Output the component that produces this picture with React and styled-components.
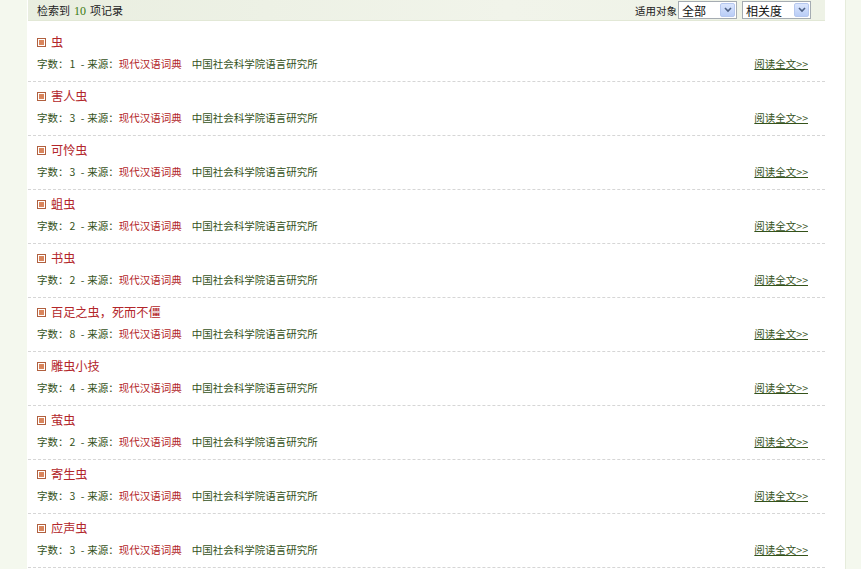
import styled, { createGlobalStyle } from "styled-components"

const GlobalStyle = createGlobalStyle`
    html, body {
        margin: 0;
        padding: 0;
        background: #f4f8ee;
        font-family: "Noto Sans CJK SC", "DejaVu Sans", sans-serif;
        font-size: 11px;
    }
`

const Page = styled.div`
    display: flex;
    min-height: 569px;
    padding-left: 27px;
`

const Main = styled.main`
    width: 797px;
    padding: 0 20px 0 1px;
    background: #fff;
    border-right: 1px solid #e6ecdc;
`

const Toolbar = styled.div`
    display: flex;
    align-items: center;
    justify-content: space-between;
    height: 20px;
    padding: 0 14px 0 9px;
    background: linear-gradient(to right, #e9eee0, #f1f4ea 60%, #eef2e6);
    border-bottom: 1px solid #e2e8d6;
    color: #222;
`

const Count = styled.span`
    color: #3b7a12;
    font-family: "Liberation Serif", serif;
    font-size: 12px;
    margin: 0 4px;
`

const Filters = styled.div`
    display: flex;
    align-items: center;
    gap: 5px;
`

const FilterLabel = styled.span`
    font-size: 10.5px;
    margin-right: -4px;
`

const FakeSelect = styled.div`
    display: flex;
    align-items: center;
    justify-content: space-between;
    width: ${props => props.w}px;
    height: 16px;
    border: 1px solid #a5acb2;
    background: #fff;
    box-sizing: content-box;
    font-size: 12px;
    color: #111;
    padding-left: 3px;
`

const Arrow = styled.span`
    display: flex;
    align-items: center;
    justify-content: center;
    width: 15px;
    height: 14px;
    margin-right: 1px;
    background: linear-gradient(#dbe6fd, #b9cdf6);
    border: 1px solid #b6c8ef;
    box-sizing: border-box;
    border-radius: 2px;
`

const List = styled.ul`
    list-style: none;
    margin: 0;
    padding: 7px 0 0;
`

const Item = styled.li`
    padding: 4px 17px 8px 9px;
    border-bottom: 1px dashed #d6d6d6;
`

const Title = styled.div`
    display: flex;
    align-items: center;
    gap: 5px;
    height: 20px;
    font-size: 12.2px;
    color: #b3262a;
`

const Bullet = styled.span`
    width: 9px;
    height: 9px;
    border: 1px solid #b0603f;
    box-sizing: border-box;
    background: #fff;
    padding: 1px;
    display: flex;

    &::after {
        content: "";
        flex: 1;
        background: #d9855c;
    }
`

const Meta = styled.div`
    display: flex;
    align-items: center;
    justify-content: space-between;
    height: 20px;
    margin-top: 1px;
    font-size: 10.5px;
    color: #34521a;
`

const Length = styled.span`
    margin: 0 3px 0 1px;
    word-spacing: 3px;
`

const Source = styled.span`
    color: #b3262a;
`

const Publisher = styled.span`
    margin-left: 10px;
`

const ReadMore = styled.a`
    color: #34521a;
    text-decoration: underline;
    cursor: pointer;
`

const entries = [
    { title: "虫", count: 1 },
    { title: "害人虫", count: 3 },
    { title: "可怜虫", count: 3 },
    { title: "蛆虫", count: 2 },
    { title: "书虫", count: 2 },
    { title: "百足之虫，死而不僵", count: 8 },
    { title: "雕虫小技", count: 4 },
    { title: "萤虫", count: 2 },
    { title: "寄生虫", count: 3 },
    { title: "应声虫", count: 3 },
]

function Chevron() {
    return (
        <svg width="8" height="6" viewBox="0 0 8 6">
            <path d="M1 1 L4 4 L7 1" fill="none" stroke="#4d6185" strokeWidth="1.6" />
        </svg>
    )
}

function App() {
    return (
        <Page>
            <GlobalStyle />
            <Main>
                <Toolbar>
                    <span>检索到<Count>10</Count>项记录</span>
                    <Filters>
                        <FilterLabel>适用对象</FilterLabel>
                        <FakeSelect w={54}>全部<Arrow><Chevron /></Arrow></FakeSelect>
                        <FakeSelect w={64}>相关度<Arrow><Chevron /></Arrow></FakeSelect>
                    </Filters>
                </Toolbar>
                <List>
                    {entries.map(entry => (
                        <Item key={entry.title}>
                            <Title>
                                <Bullet />
                                {entry.title}
                            </Title>
                            <Meta>
                                <span>
                                    字数：<Length>{entry.count} -</Length>来源：<Source>现代汉语词典</Source>
                                    <Publisher>中国社会科学院语言研究所</Publisher>
                                </span>
                                <ReadMore>阅读全文&gt;&gt;</ReadMore>
                            </Meta>
                        </Item>
                    ))}
                </List>
            </Main>
        </Page>
    )
}

export default App
